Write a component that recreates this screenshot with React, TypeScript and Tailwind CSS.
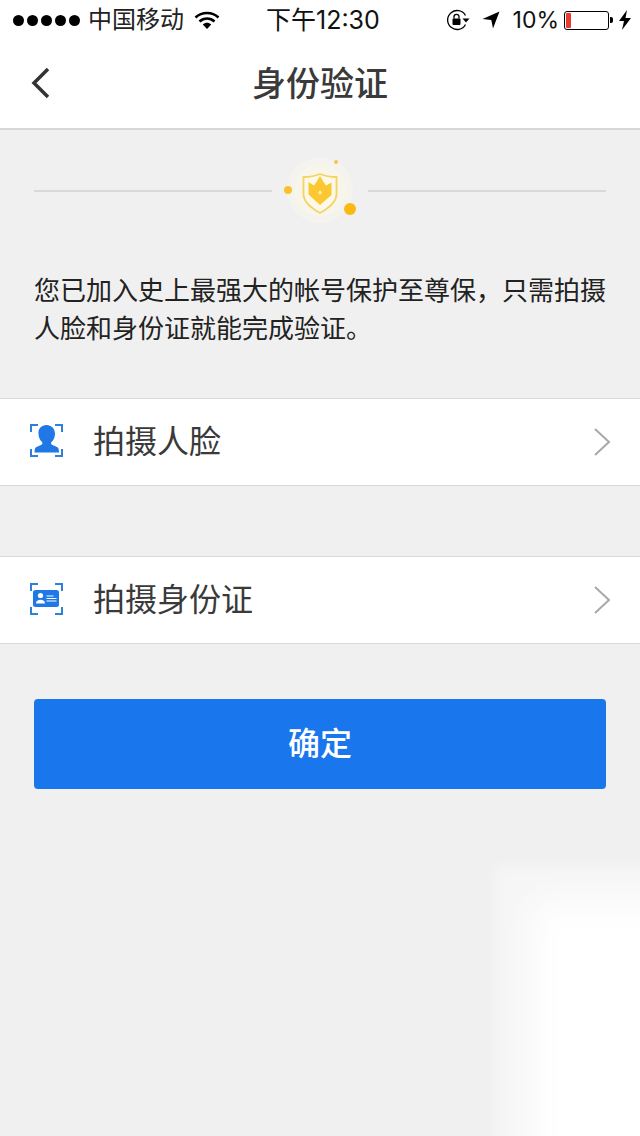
const CJK = "font-['Inter','Noto_Sans_CJK_SC',sans-serif]";

function Corners({ bottom }: { bottom: number }) {
    return (
        <path
            d={`M2 8V1h7M26 1h7v7M33 ${bottom - 7}v7h-7M9 ${bottom}H2v-7`}
            fill="none"
            stroke="#2f80d8"
            strokeWidth="2"
        />
    );
}

function FaceIcon() {
    return (
        <svg className="mb-[2px]" width="34" height="34" viewBox="0 0 34 34">
            <Corners bottom={32} />
            <path
                d="M17.500 1c5 0 8.500 3.700 8.500 8.800 0 3.500-1.500 6.500-3.500 8.300-.7.700-.6 2 .4 2.600 1.900 1 3.900 1.500 5.600 2.500 1 .6 1.500 2.500 1.500 5.300H5.500c0-2.800.5-4.700 1.500-5.300 1.700-1 3.700-1.500 5.600-2.500 1-.6 1.100-1.900.4-2.600-2-1.800-3.500-4.800-3.500-8.300C9 4.700 12.500 1 17.500 1z"
                fill="#1f78e6"
            />
        </svg>
    );
}

function CardIcon() {
    return (
        <svg width="34" height="34" viewBox="0 0 34 34">
            <Corners bottom={31} />
            <rect x="4" y="7" width="26" height="17" rx="2.500" fill="#1f78e6" />
            <circle cx="11.500" cy="12.500" r="2.600" fill="#fff" />
            <path d="M7 20.500c0-2.600 1.800-3.800 4.500-3.800s4.500 1.200 4.500 3.800z" fill="#fff" />
            <path d="M17.500 13h7M17.500 15.500h10M17.500 18h10" stroke="#fff" strokeWidth="1" />
        </svg>
    );
}

function Chevron() {
    return (
        <svg width="18" height="30" viewBox="0 0 18 30">
            <path d="M2 2l14 13L2 28" fill="none" stroke="#a8a8a8" strokeWidth="2" />
        </svg>
    );
}

function Row({ icon, label }: { icon: React.ReactNode; label: string }) {
    return (
        <div className="flex h-[88px] items-center border-y border-[#d9d9d9] bg-white pl-[29px] pr-[29px]">
            {icon}
            <span className="ml-[30px] flex-1 text-[32px] leading-none text-[#3a3a3a]">{label}</span>
            <Chevron />
        </div>
    );
}

function StatusBar() {
    return (
        <div className="flex h-10 items-center bg-white text-black">
            <div className="flex w-[260px] items-center pl-[13px]">
                <div className="flex gap-[3px]">
                    {[0, 1, 2, 3, 4].map((i) => (
                        <span key={i} className="h-[11px] w-[11px] rounded-full bg-black" />
                    ))}
                </div>
                <span className="ml-[8px] text-[24px] leading-none text-[#222]">中国移动</span>
                <svg className="ml-[10px]" width="26" height="20" viewBox="0 0 26 20">
                    <path d="M1.500 7.500c6.500-6 16.500-6 23 0" fill="none" stroke="#000" strokeWidth="2.600" />
                    <path d="M5.500 11.500c4.500-4 10.500-4 15 0" fill="none" stroke="#000" strokeWidth="2.600" />
                    <path d="M8.800 14.500c2.500-2.200 5.900-2.200 8.400 0L13 19z" fill="#000" />
                </svg>
            </div>
            <span className="ml-[6px] text-[25px] leading-none text-[#111]">下午12:30</span>
            <div className="ml-auto flex items-center pr-[9px]">
                <svg width="24" height="22" viewBox="0 0 24 22">
                    <path d="M19.500 6.500A9.500 9.500 0 1 0 19.500 15.500" fill="none" stroke="#000" strokeWidth="1.300" />
                    <path d="M16.500 9.500h7l-3.500 4z" fill="#000" />
                    <rect x="6.500" y="9.500" width="8" height="6.500" rx="1" fill="#000" />
                    <path d="M8 9.500V7.800a2.500 2.500 0 0 1 5 0v1.700" fill="none" stroke="#000" strokeWidth="1.300" />
                </svg>
                <svg className="ml-[12px]" width="18" height="18" viewBox="0 0 18 18">
                    <path d="M17.500.500L11 17.500 9.300 9 .500 8z" fill="#000" />
                </svg>
                <span className="ml-[13px] text-[23px] leading-none text-[#111]">10%</span>
                <div className="ml-[5px] h-[19px] w-[45px] rounded-[3px] border border-black p-[1px]">
                    <div className="h-full w-[5px] rounded-[1px] bg-[#ea3a30]" />
                </div>
                <div className="ml-[1px] h-[6px] w-[3px] rounded-r-[2px] bg-black" />
                <svg className="ml-[6px]" width="12" height="20" viewBox="0 0 12 20">
                    <path d="M8 0L0 11h5l-2 9 9-12H6.500z" fill="#000" />
                </svg>
            </div>
        </div>
    );
}

function ShieldBadge() {
    return (
        <div className="relative h-[68px] w-[96px]">
            <svg width="96" height="76" viewBox="0 0 96 76" className="absolute left-0 top-[-5px]">
                <circle cx="48" cy="38" r="33" fill="#f8f6ec" opacity="0.5" />
                <circle cx="48" cy="38" r="26" fill="#faf7e8" opacity="0.7" />
                <circle cx="16" cy="38" r="4" fill="#fbc02d" />
                <circle cx="64" cy="10" r="2" fill="#f5c451" />
                <circle cx="78" cy="57" r="6" fill="#fbb914" />
                <path
                    d="M31.500 25c6.500 0 12-1 16.500-3 4.500 2 10 3 16.500 3v17c0 8-7.500 14-16.500 19-9-5-16.500-11-16.500-19z"
                    fill="#fdf9e8"
                    stroke="#f4d264"
                    strokeWidth="1.800"
                />
                <path d="M36.500 30l5.500 3.500 2-3 4-6.500 4 6.500 2 3 5.500-3v12.500L48 53 36.500 42.500z" fill="#fcc832" />
                <path d="M48 38l2 2.500-2 2.500-2-2.500z" fill="#fdeaa0" />
            </svg>
        </div>
    );
}

export default function App() {
    return (
        <div className={`relative h-[1136px] w-[640px] overflow-hidden bg-[#f0f0f0] ${CJK}`}>
            <StatusBar />
            <div className="relative flex h-[90px] items-center justify-center border-b-2 border-[#d6d6d6] bg-white">
                <svg className="absolute left-[31px] top-[27px]" width="20" height="32" viewBox="0 0 20 32">
                    <path d="M17 2L3 16l14 14" fill="none" stroke="#333" strokeWidth="3.500" />
                </svg>
                <h1 className="text-[34px] font-medium leading-none text-[#3a3a3a]">身份验证</h1>
            </div>

            <div className="flex h-[68px] items-center justify-between px-[34px] pt-[53px]">
                <div className="h-[2px] w-[238px] bg-[#d9d9d9]" />
                <ShieldBadge />
                <div className="h-[2px] w-[238px] bg-[#d9d9d9]" />
            </div>

            <p className="mt-[74px] px-[34px] text-[26px] leading-[38px] text-[#222]">
                您已加入史上最强大的帐号保护至尊保，只需拍摄人脸和身份证就能完成验证。
            </p>

            <div className="mt-[50px]">
                <Row icon={<FaceIcon />} label="拍摄人脸" />
            </div>
            <div className="mt-[70px]">
                <Row icon={<CardIcon />} label="拍摄身份证" />
            </div>

            <button className="mx-[34px] mt-[55px] flex h-[90px] w-[572px] items-center justify-center rounded-[4px] bg-[#1a76ed] text-[32px] font-medium text-white">
                确定
            </button>

            {/* white smudge bottom right of the screenshot */}
            <div className="absolute left-[530px] top-[900px] h-[300px] w-[200px] bg-white blur-[18px]" />
            <div className="absolute left-[495px] top-[866px] h-[300px] w-[200px] bg-white/40 blur-[6px]" />
        </div>
    );
}
